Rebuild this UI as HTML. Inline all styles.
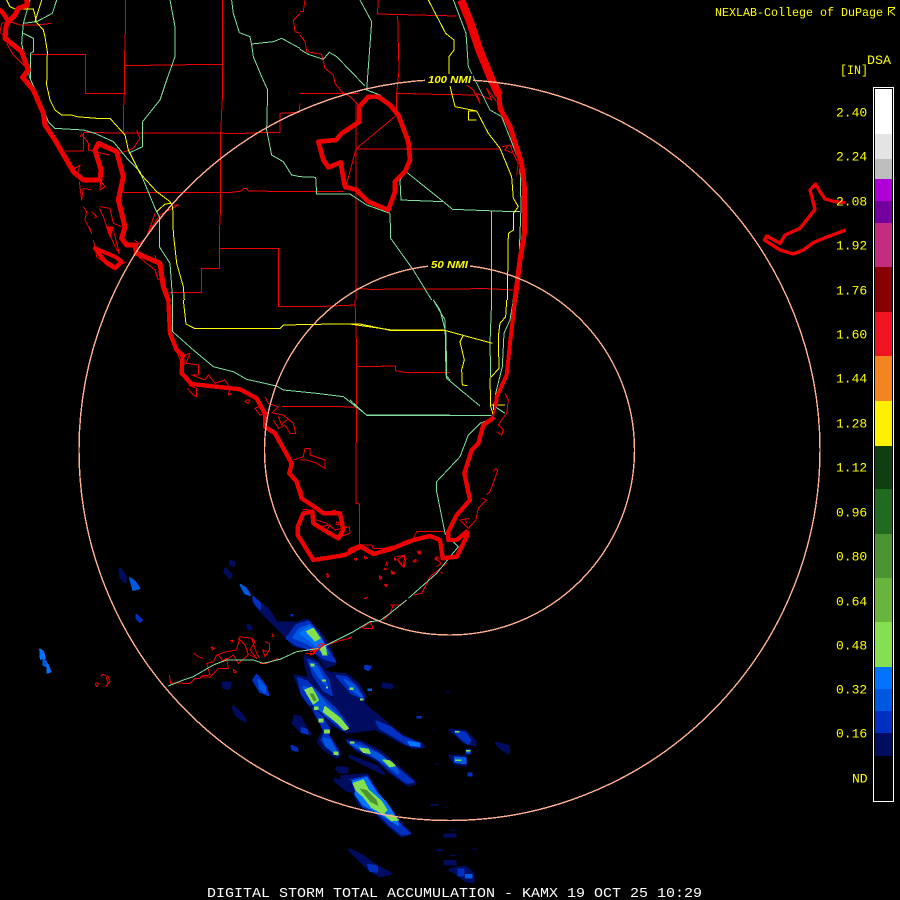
<!DOCTYPE html>
<html><head><meta charset="utf-8"><title>DSA KAMX</title>
<style>
html,body{margin:0;padding:0;background:#000;width:900px;height:900px;overflow:hidden}
svg{display:block}
.r polyline,.r path{fill:none;stroke:#f00000;stroke-width:3;stroke-linejoin:round}
.g polyline{fill:none;stroke:#80e0a0;stroke-width:3}
.y polyline{fill:none;stroke:#ffff00;stroke-width:3}
.c polyline{fill:none;stroke:#ee0000;stroke-width:15;stroke-linejoin:round;stroke-linecap:round}
.r,.g,.y,.c,.e{shape-rendering:crispEdges}
.n{fill:#000c60}.d{fill:#0030c0}.m{fill:#0058e0}.b{fill:#0073ff}.h{fill:#84e050}.k{fill:#4c9432}.j{fill:#68b43c}
polygon.n{stroke:#000c60;stroke-width:10;stroke-linejoin:round}
polygon.d{stroke:#0030c0;stroke-width:7;stroke-linejoin:round}
polygon.m{stroke:#0058e0;stroke-width:6;stroke-linejoin:round}
polygon.b{stroke:#0073ff;stroke-width:5;stroke-linejoin:round}
polygon.h{stroke:#84e050;stroke-width:4;stroke-linejoin:round}
text{font-family:"Liberation Mono",monospace;fill:#ffff00}
.lb{font-size:13px}
.nm{font-family:"Liberation Sans",sans-serif;font-weight:bold;font-style:italic;font-size:10.5px}
</style></head><body>
<svg width="900" height="900" viewBox="0 0 900 900" xmlns="http://www.w3.org/2000/svg">
<rect width="900" height="900" fill="#000"/>

<!-- radar echoes -->
<g class="e" transform="translate(150 600) scale(.33333)">
<polygon class="n" points="310,0 350,25 380,70 440,70 470,60 510,100 540,150 555,190 530,200 490,150 430,135 410,110 375,75 330,30"/>
<polygon class="n" points="470,190 550,225 640,310 700,370 680,385 600,395 550,370 480,250"/>
<polygon class="n" points="600,470 680,500 700,520 660,500"/>
<polygon class="d" points="410,115 440,75 475,65 505,100 530,145 555,185 520,175 490,150 440,135"/>
<polygon class="m" points="430,112 450,85 480,75 510,110 535,160 510,150 470,130"/>
<polygon class="b" points="450,100 480,80 510,115 530,150 505,140"/>
<polygon class="h" points="470,95 490,85 510,115 495,122"/>
<polygon class="h" points="510,145 525,140 530,165 520,165"/>
<polygon class="n" points="465,170 500,185 540,230 550,270 545,300 520,290 490,240 470,205"/>
<polygon class="d" points="475,180 500,190 535,240 545,285 520,270 490,225"/>
<polygon class="m" points="480,190 500,200 530,255 510,235"/>
<rect class="h" x="482" y="190" width="12" height="9"/><rect class="h" x="516" y="238" width="12" height="6"/><rect class="h" x="528" y="260" width="6" height="6"/>
<polygon class="n" points="550,220 590,225 625,255 645,290 635,310 600,290 565,255"/>
<polygon class="d" points="560,228 590,232 620,260 640,295 605,280"/>
<polygon class="m" points="585,240 610,255 635,290 610,272"/>
<rect class="h" x="598" y="262" width="12" height="8"/><rect class="h" x="630" y="295" width="10" height="6"/>
<polygon class="n" points="630,310 680,345 720,380 760,410 810,430 820,440 790,442 750,425 710,402 675,385 650,345"/>
<polygon class="d" points="680,365 720,382 755,410 790,425 810,432 810,440 770,432 725,405 690,385"/>
<polygon class="b" points="775,425 808,430 808,438 780,436"/>
<polygon class="n" points="435,228 470,235 510,275 560,320 600,375 590,395 550,375 500,340 460,290"/>
<polygon class="d" points="445,235 470,245 510,285 555,325 595,378 580,390 530,350 480,315 455,280"/>
<polygon class="m" points="460,262 490,265 525,310 575,355 590,385 550,360 500,325"/>
<polygon class="h" points="465,270 485,262 505,300 490,312"/>
<polygon class="k" points="478,280 490,280 500,300 492,305"/>
<polygon class="h" points="525,320 570,355 595,385 585,390 555,362 520,335"/>
<polygon class="n" points="485,320 515,345 540,385 530,400 545,420 570,460 560,472 520,445 505,425 525,385 500,350"/>
<polygon class="d" points="490,325 515,350 535,385 530,400 560,450 565,465 525,435 515,420 525,395 505,355"/>
<polygon class="m" points="520,415 540,420 562,465 530,440"/>
<rect class="h" x="505" y="355" width="15" height="12"/><rect class="h" x="522" y="388" width="18" height="12"/><rect class="h" x="550" y="455" width="16" height="10"/><rect class="h" x="492" y="320" width="14" height="10"/>
<polygon class="n" points="590,420 630,425 690,455 730,490 770,525 795,550 775,555 725,520 680,480 620,450"/>
<polygon class="d" points="595,425 630,430 685,460 725,492 770,530 790,545 770,548 722,512 680,475 620,445"/>
<polygon class="m" points="600,430 640,442 690,465 740,505 745,520 705,490 660,462"/>
<polygon class="h" points="630,445 655,448 660,460 640,457"/><polygon class="h" points="700,480 720,483 735,497 720,500"/><rect class="h" x="600" y="424" width="14" height="6"/>
<polygon class="n" points="575,530 650,525 690,590 730,640 760,680 780,700 755,708 720,680 680,640 630,615 610,575"/>
<polygon class="d" points="595,542 650,530 685,585 720,625 750,675 778,700 755,703 720,675 690,645 640,620 620,590"/>
<polygon class="b" points="603,545 650,533 680,580 710,610 735,650 745,675 720,660 690,640 640,615 618,585"/>
<polygon class="h" points="610,550 640,540 655,570 695,605 710,630 700,642 665,622 640,590 620,572"/>
<polygon class="k" points="628,565 650,570 680,600 685,618 660,605"/>
<polygon class="h" points="705,645 725,645 745,660 725,662"/>
<polygon class="n" points="600,750 640,770 680,800 720,820 690,827 655,805 625,775"/><polygon class="d" points="655,795 680,800 680,815 660,812"/>
<polygon class="d" points="320,225 345,255 355,285 330,275 310,240"/><polygon class="m" points="325,240 345,262 345,278 330,265"/>
<polygon class="n" points="220,250 240,250 235,265 222,262"/>
<polygon class="n" points="250,322 275,345 285,362 260,345"/>
<polygon class="n" points="435,350 450,352 470,390 480,402 455,395 430,370"/><polygon class="d" points="455,385 470,390 472,400 455,395"/>
<polygon class="d" points="425,438 440,445 442,452 428,448"/><polygon class="d" points="645,198 662,200 655,210 645,205"/><polygon class="n" points="700,252 725,256 725,262 700,260"/><rect class="d" x="800" y="348" width="16" height="8"/><rect class="m" x="652" y="265" width="14" height="8"/><rect class="d" x="422" y="42" width="8" height="8"/><rect class="n" x="855" y="490" width="12" height="3"/><rect class="n" x="842" y="612" width="22" height="6"/><rect class="n" x="880" y="702" width="20" height="4"/><rect class="n" x="858" y="750" width="22" height="3"/><rect class="n" x="880" y="780" width="20" height="5"/><rect class="n" x="888" y="275" width="12" height="3"/><rect class="n" x="840" y="388" width="15" height="2"/>
<polygon class="n" points="560,505 590,505 590,515 570,515"/><polygon class="n" points="555,540 600,545 610,575 590,570"/>
</g>
<g class="e" transform="translate(320 730) scale(.33333)">
<polygon class="n" points="390,0 435,5 465,35 465,45 430,35 410,15"/><polygon class="d" points="405,5 435,8 450,30 445,42 420,22"/><rect class="h" x="405" y="3" width="14" height="4"/>
<rect class="n" x="435" y="55" width="20" height="20"/><rect class="m" x="438" y="58" width="14" height="12"/><rect class="h" x="438" y="60" width="14" height="5"/>
<polygon class="n" points="390,78 437,80 437,105 405,100"/><polygon class="m" points="405,82 437,85 437,100 405,96"/><rect class="h" x="405" y="88" width="20" height="5"/>
<polygon class="n" points="530,40 565,50 565,68 545,55"/><rect class="d" x="442" y="128" width="16" height="12"/>
<rect class="n" x="335" y="222" width="20" height="6"/><rect class="n" x="390" y="298" width="20" height="4"/><rect class="n" x="370" y="310" width="40" height="13"/>
<rect class="n" x="390" y="375" width="20" height="3"/><rect class="n" x="370" y="390" width="40" height="16"/><rect class="n" x="350" y="358" width="20" height="4"/>
<polygon class="n" points="390,420 410,415 435,412 458,430 458,455 435,450 410,430"/><rect class="d" x="412" y="415" width="22" height="25"/><rect class="m" x="435" y="432" width="22" height="14"/><rect class="n" x="455" y="356" width="18" height="3"/><rect class="n" x="375" y="232" width="15" height="2"/>
</g>
<g class="e" transform="translate(20 560) scale(.33333)">
<polygon class="n" points="300,28 315,50 315,65 302,48"/><polygon class="m" points="330,55 345,65 358,85 340,90"/><polygon class="d" points="350,165 365,180 360,185 350,175"/>
<polygon class="b" points="60,268 70,275 75,295 62,297"/><polygon class="m" points="70,298 78,305 78,318 70,315"/><polygon class="b" points="82,312 92,335 82,338"/>
<polygon class="n" points="617,28 632,45 630,52 615,35"/><polygon class="m" points="662,75 678,85 690,105 675,100"/><polygon class="d" points="700,112 720,130 720,146 705,130"/><polygon class="n" points="632,5 642,8 640,15 632,12"/><polygon class="n" points="685,195 693,205 690,207 684,200"/><polygon class="n" points="610,370 628,380 620,384"/>
</g>

<!-- base map: zoom region 1 (top left) -->
<g transform="scale(.33333)">
<g class="r">
<polyline points="376,0 376,95 373,195 373,280 370,340 370,400"/>
<polyline points="90,163 256,163 256,280 373,280"/>
<polyline points="373,197 495,195 667,193"/>
<polyline points="667,0 667,295 662,400 662,620 658,700 658,745 835,745 835,900"/>
<polyline points="658,745 658,805 604,805 604,877 510,877"/>
<polyline points="250,398 250,453 195,453"/>
<polyline points="250,398 730,400 795,397 840,397 840,340 897,337 900,310"/>
<polyline points="370,577 695,577 725,573 730,565 740,565 745,573 900,575"/>
<polyline points="900,40 880,60 885,95 900,100"/>
<polyline points="155,70 110,75 60,75 30,65 5,70 0,95 20,118"/>
<polyline points="20,130 40,165 70,195 85,210"/>
<polyline points="170,425 195,460 210,490 225,505 240,495 230,530"/>
<polyline points="238,545 245,600 250,565 275,570"/>
<polyline points="250,620 260,635 255,660 275,700 268,680"/>
<polyline points="275,635 290,650 280,655"/>
<polyline points="300,620 330,625 340,670 365,680"/>
<polyline points="298,625 310,650 320,680"/>
<polyline points="320,680 345,740 358,760 340,690"/>
<polyline points="280,720 290,770 330,800"/>
<polyline points="465,640 440,710 420,730 385,735"/>
<polyline points="410,390 420,415 400,445 360,460"/>
<polyline points="522,615 535,615 480,645 450,690 445,700"/>
<polyline points="240,410 245,402 265,430 265,450 305,460 330,465"/>
<polyline points="300,540 315,560 300,570 305,520"/>
<polyline points="380,785 350,800 300,770"/>
<polyline points="415,770 465,810 475,840"/>
<polyline points="405,720 415,730 405,765"/>
<polyline points="465,765 470,785"/>
</g>
<g class="g">
<polyline points="170,0 157,40 110,65 70,70 65,130 75,180 90,235 115,290 145,365 165,385 250,390 285,400 340,425 385,480 420,515 465,625 478,650 478,740 510,790 518,900"/>
<polyline points="90,0 70,70"/>
<polyline points="70,100 100,115 100,155 92,160 92,240"/>
<polyline points="510,0 525,80 525,170 500,240 480,300 428,365 428,440 385,460"/>
<polyline points="695,0 700,40 718,98 750,110 755,135 760,170 785,230 803,270 800,390 815,465 850,485 875,525 900,530"/>
<polyline points="755,132 820,125 845,115 900,145"/>
</g>
<g class="y">
<polyline points="20,0 30,20 45,27 100,27 105,45 108,65 130,90 135,110 142,155 140,255 150,300 165,330 185,345 215,345 230,350 290,355 330,355 375,405 385,450 420,520 470,575 510,605 518,620 520,700 530,790 550,860 553,900"/>
<polyline points="105,65 125,0"/>
<polyline points="470,635 495,612 515,610"/>
</g>
<g class="c">
<polyline points="80,0 82,15 55,25 45,45 25,65 18,80 15,115 40,135 65,155 85,210 68,232 100,270 130,340 135,375 165,420 220,515 250,540 300,540 303,510 285,450 295,430 350,455 370,530 355,600 375,680 365,715 380,735 405,735 410,760 480,790 490,860 505,900"/>
<polyline style="stroke-width:12" points="285,745 345,770 365,785 345,805 320,790 285,745"/>
<polyline style="stroke-width:14" points="0,30 10,40 25,65"/>
</g>
<polygon fill="#ee0000" class="e" points="318,680 342,680 330,715"/>
</g>

<!-- zoom region 2 (top centre) -->
<g transform="translate(300 0) scale(.33333)">
<g class="r">
<polyline points="235,0 232,42 470,48"/>
<polyline points="293,48 295,135 297,210 290,280 290,330"/>
<polyline points="0,280 130,280 175,280"/>
<polyline points="290,280 405,283 530,285"/>
<polyline points="0,35 10,35 15,0"/>
<polyline points="0,105 15,125 20,155 65,163 75,205 100,225 105,250 125,275 150,290 175,315"/>
<polyline points="290,345 168,447 135,570"/>
<polyline points="168,310 168,650 168,900"/>
<polyline points="168,447 600,447"/>
<polyline points="0,575 130,575"/>
<polyline points="170,865 210,868 560,866 640,870"/>
<polyline points="500,255 520,270 540,310 530,280 575,300 560,265 590,305"/>
<polyline points="607,440 630,435 640,460 615,450 625,435"/>
<polyline points="640,460 655,490 650,525"/>
</g>
<g class="g">
<polyline points="0,148 25,163 70,178 88,157 110,170 195,258"/>
<polyline points="180,0 215,65 200,270 240,285 295,340 330,430 330,490 318,515 300,540 303,600 430,605 458,628 640,635 660,635"/>
<polyline points="318,515 430,605"/>
<polyline points="270,640 272,715 340,810 395,900"/>
<polyline points="0,530 47,532 50,582 150,582 200,615 270,640"/>
<polyline points="460,0 498,100 505,200 535,260 570,330 605,350 660,490 663,620 660,700 655,830 640,900"/>
<polyline points="575,635 575,900"/>
</g>
<g class="y">
<polyline points="385,0 437,100 462,120 462,150 447,170 447,225"/>
<polyline points="450,258 465,320 530,333 565,400 600,445 635,530 640,595 655,620 640,640 640,690 625,700 622,900"/>
<polyline points="530,333 505,333 505,360 530,360"/>
</g>
<g class="c">
<polyline style="stroke-width:14" points="178,365 178,320 205,290 235,290 270,315 295,345 325,425 330,480 315,515 285,545 285,575 265,630 205,605 170,570 135,560 130,535 122,487 85,502 70,480 55,425 108,420 125,400 178,365"/>
<polyline style="stroke-width:24;stroke-linecap:butt" points="483,0 508,60 538,150 575,240 597,285"/>
<polyline points="597,285 600,325 630,380 665,490 673,560 673,700 660,780 645,900"/>
</g>
</g>

<!-- zoom region 3 (centre) -->
<g transform="translate(150 300) scale(.33333)">
<g class="r">
<polyline points="385,0 385,20 500,20 615,15"/>
<polyline points="615,0 620,150 618,610 628,612 628,735"/>
<polyline points="622,200 737,198 737,212 770,218 900,218"/>
<polyline points="395,320 575,320 620,322"/>
<polyline points="70,130 95,190 105,165 120,160 108,190 145,195 145,225 125,225 165,240 175,225 195,250 225,240 240,265"/>
<polyline points="115,255 140,265 140,290 130,285 112,265"/>
<polyline points="240,265 235,285 245,280"/>
<polyline points="290,300 300,300 295,310 285,305 290,300"/>
<polyline points="335,315 315,325 330,345 345,340"/>
<polyline points="345,290 355,310 385,320 365,340"/>
<polyline points="370,340 400,345 430,370 437,400 420,400 405,375 385,385 370,360"/>
<polyline points="385,350 395,375 410,360"/>
<polyline points="380,420 385,430"/>
<polyline points="430,480 460,470 465,445 480,445 480,465 525,480 525,505 500,490 470,480 450,480"/>
<polyline points="445,555 460,580"/>
<polyline points="458,628 480,630"/>
<polyline points="500,660 530,670 555,690 598,680 600,700 570,710"/>
<polyline points="510,680 540,675 525,700"/>
<polyline points="540,635 555,630 560,640"/>
<polyline points="560,665 568,668 565,675 558,672 560,665"/>
<polyline points="530,820 538,828 532,832 530,820"/>
<polyline points="612,775 620,775 618,782 612,775"/>
<polyline points="643,768 652,775 645,777 643,768"/>
<polyline points="688,826 695,832 690,838 688,826"/>
<polyline points="703,852 712,855 708,860 703,852"/>
<polyline points="723,812 735,820 726,822 723,812"/>
<polyline points="702,805 712,808"/>
<polyline points="735,770 738,780 733,780 735,770"/>
<polyline points="742,778 760,768 768,775 762,802 750,790 742,778"/>
<polyline points="788,785 798,778 798,786 788,785"/>
<polyline points="803,752 812,755 805,762 803,752"/>
<polyline points="858,770 865,775 858,780 858,770"/>
<polyline points="645,895 652,892"/>
<polyline points="630,735 665,735 670,745 700,745 745,735 760,725 790,715 800,695 850,695 885,695"/>
</g>
<g class="g">
<polyline points="68,0 68,95 130,150 190,200 250,215 290,238 380,258 400,270 500,280 580,290 650,345 900,345"/>
<polyline points="850,0 885,60 888,225 900,240"/>
</g>
<g class="y"><polyline points="100,0 108,72 133,85 360,85 390,85 400,75 555,72 630,72 725,92 880,92"/></g>
<g class="c">
<polyline style="stroke-width:13" points="55,0 60,100 80,150 98,165 95,220 125,252 270,268 320,295 345,340 345,380 375,400 425,490 418,520 440,545 455,595 500,625 520,640 570,640 580,690 565,715 530,695 490,670 487,635 460,640 443,680 443,705 490,780 585,765 630,740 670,760"/>
</g>
</g>

<!-- zoom region 4 (south east) -->
<g transform="translate(350 300) scale(.33333)">
<g class="r">
<polyline points="440,395 455,405 460,390 445,375 455,360 470,340 475,300 465,280"/>
<polyline points="430,515 437,505 443,512 420,575 410,585"/>
<polyline points="395,595 410,600 385,625 378,660 355,685 330,660 360,655"/>
<polyline points="350,670 345,655"/>
<polyline points="255,780 262,770 255,775 275,790 260,800"/>
<polyline points="290,790 240,830 215,880 190,885"/>
<polyline points="200,755 212,760 205,762"/>
<polyline points="140,770 165,765 160,800 145,780"/>
<polyline points="190,785 198,778"/>
<polyline points="108,785 112,795 105,795"/>
<polyline points="125,815 132,822 125,820"/>
<polyline points="88,828 95,835 90,838"/>
<polyline points="105,852 110,858 103,858"/>
<polyline points="100,808 110,808"/>
<polyline points="272,817 280,820"/>
<polyline points="42,895 50,895"/>
</g>
<g class="g">
<polyline points="250,0 270,30 288,100 290,235 390,318"/>
<polyline points="425,0 420,130 422,230"/>
<polyline points="0,300 50,346 425,346"/>
<polyline points="430,355 390,370 355,405 330,470 260,545 260,575 285,700 325,740 260,820 175,895"/>
<polyline points="490,0 480,60 462,100 457,200 437,280 435,320 465,340"/>
</g>
<g class="y">
<polyline points="340,105 330,125 343,180 335,210 337,255 353,257"/>
<polyline points="470,0 467,50 450,70 445,110 447,205 420,235 422,320 430,345"/>
<polyline points="425,315 465,315"/>
<polyline points="432,310 430,330"/>
<polyline points="0,72 125,90 280,90 428,130"/>
</g>
<g class="c">
<polyline style="stroke-width:13" points="0,750 30,738 70,762 120,748 190,720 240,708 270,720 278,775 320,770 350,710 350,695 320,720 295,720 295,695 320,645 360,600 343,520 365,450 385,430 400,375 428,355"/>
<polyline style="stroke-width:5" points="428,355 438,315"/>
<polyline style="stroke-width:12" points="438,315 440,290 470,225 480,130 495,0"/>
</g>
</g>

<!-- keys -->
<g transform="translate(150 600) scale(.33333)">
<g class="r">
<polyline points="58,225 62,250 80,248 100,250 120,250 135,235 150,235 155,228 180,225 170,190 190,185 200,165 230,155 260,150 270,110 305,115 320,160 330,175"/>
<polyline points="155,230 180,232 205,205 235,205 230,175 205,190"/>
<polyline points="205,165 220,185 250,165 265,190 295,165 285,135 265,115"/>
<polyline points="305,115 315,125 300,150 320,175 300,165"/>
<polyline points="345,125 358,130 358,150 345,170 338,150 350,155"/>
<polyline points="130,158 145,170 160,175"/>
<polyline points="183,140 193,145 188,150 183,140"/>
<polyline points="240,122 248,122 245,130"/>
<polyline points="365,100 372,108 365,110"/>
<polyline points="250,208 260,216 252,218 250,208"/>
<polyline points="330,190 350,190 385,175"/>
<polyline points="465,160 490,160 510,130 530,135 575,120 600,115 605,110 595,115"/>
<polyline points="470,152 490,145 495,160 480,165"/>
<polyline points="635,85 660,65 670,85 640,85"/>
<polyline points="700,60 720,40 728,20 722,15 750,15 770,0"/>
</g>
<g class="g"><polyline points="770,0 720,40 690,62 660,65 610,95 560,120 510,145 440,155 390,178 340,190 310,180 230,180 190,195 130,230 100,240 55,258"/></g>
<polyline class="e" fill="none" stroke="#f00000" stroke-width="4" points="480,155 495,150 490,160 520,135"/>
</g>

<!-- small island near keys -->
<g class="r" transform="translate(20 560) scale(.33333)">
<polyline points="243,350 248,343 265,350 270,365 258,380 265,368 258,352"/>
<polyline points="228,368 235,370 232,380 226,375 228,368"/>
</g>

<!-- Bahamas island -->
<g transform="translate(700 0) scale(.33333)">
<g class="c"><polyline style="stroke-width:10;stroke-linecap:butt" points="437,608 405,605 375,597 360,575 347,552 330,570 345,628 300,685 255,705 240,730 200,708 193,720 240,750 280,762 310,750 340,728 370,715 437,690"/></g>
</g>

<!-- rings -->
<g fill="none" stroke="#ffb090" stroke-width="1.4" shape-rendering="crispEdges">
<circle cx="449.5" cy="450" r="370.5"/>
<circle cx="449.5" cy="450" r="185"/>
</g>
<rect x="425" y="74" width="48" height="11" fill="#000"/>
<rect x="428" y="259" width="42" height="11" fill="#000"/>
<text class="nm" x="428" y="83" textLength="43" lengthAdjust="spacingAndGlyphs">100 NMI</text>
<text class="nm" x="431" y="268" textLength="37" lengthAdjust="spacingAndGlyphs">50 NMI</text>

<!-- colour bar -->
<g shape-rendering="crispEdges">
<rect x="873.5" y="87.5" width="20" height="714" fill="#000" stroke="#fff" stroke-width="1"/>
<rect x="875" y="89" width="17" height="45" fill="#ffffff"/>
<rect x="875" y="134" width="17" height="25" fill="#e4e4e4"/>
<rect x="875" y="159" width="17" height="20" fill="#bebebe"/>
<rect x="875" y="179" width="17" height="22" fill="#b000d8"/>
<rect x="875" y="201" width="17" height="22" fill="#7400a0"/>
<rect x="875" y="223" width="17" height="44" fill="#c42c80"/>
<rect x="875" y="267" width="17" height="45" fill="#880000"/>
<rect x="875" y="312" width="17" height="44" fill="#f01422"/>
<rect x="875" y="356" width="17" height="45" fill="#f48420"/>
<rect x="875" y="401" width="17" height="45" fill="#fff000"/>
<rect x="875" y="446" width="17" height="43" fill="#0f3f10"/>
<rect x="875" y="489" width="17" height="45" fill="#206b20"/>
<rect x="875" y="534" width="17" height="44" fill="#4c9432"/>
<rect x="875" y="578" width="17" height="44" fill="#68b43c"/>
<rect x="875" y="622" width="17" height="45" fill="#84e050"/>
<rect x="875" y="667" width="17" height="22" fill="#0073ff"/>
<rect x="875" y="689" width="17" height="22" fill="#0058e0"/>
<rect x="875" y="711" width="17" height="22" fill="#0030c0"/>
<rect x="875" y="733" width="17" height="23" fill="#000c60"/>
</g>

<!-- labels -->
<text class="lb" x="836" y="116.5">2.40</text>
<text class="lb" x="836" y="160.5">2.24</text>
<text class="lb" x="836" y="205.5">2.08</text>
<text class="lb" x="836" y="249.5">1.92</text>
<text class="lb" x="836" y="294.5">1.76</text>
<text class="lb" x="836" y="338.5">1.60</text>
<text class="lb" x="836" y="382.5">1.44</text>
<text class="lb" x="836" y="427.5">1.28</text>
<text class="lb" x="836" y="471.5">1.12</text>
<text class="lb" x="836" y="516.5">0.96</text>
<text class="lb" x="836" y="560.5">0.80</text>
<text class="lb" x="836" y="605.5">0.64</text>
<text class="lb" x="836" y="649.5">0.48</text>
<text class="lb" x="836" y="693.5">0.32</text>
<text class="lb" x="836" y="737.5">0.16</text>
<text class="lb" x="852" y="782.5">ND</text>
<text class="lb" x="867" y="64" textLength="24" lengthAdjust="spacingAndGlyphs">DSA</text>
<text class="lb" x="840" y="74" textLength="28" lengthAdjust="spacingAndGlyphs">[IN]</text>
<text x="715" y="16" textLength="168" lengthAdjust="spacingAndGlyphs" style="font-size:11.7px">NEXLAB-College of DuPage</text>
<path d="M895 7.5H888.5V15.5M895 8L890 11.5L895 15.5" fill="none" stroke="#ffff00" stroke-width="1" shape-rendering="crispEdges"/>
<text x="207" y="897" textLength="495" lengthAdjust="spacingAndGlyphs" style="fill:#fff;font-size:13.5px">DIGITAL STORM TOTAL ACCUMULATION - KAMX 19 OCT 25 10:29</text>
</svg>
</body></html>
